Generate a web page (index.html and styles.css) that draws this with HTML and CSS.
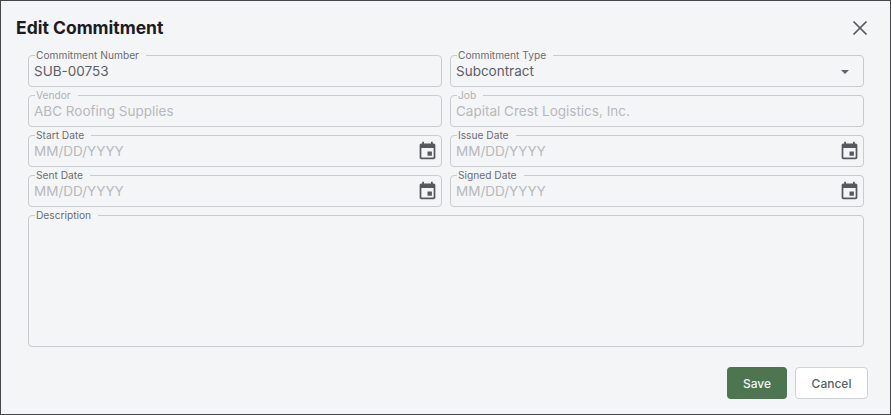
FILE: index.html
```html
<!DOCTYPE html>
<html lang="en">
<head>
  <meta charset="UTF-8" />
  <title>Edit Commitment</title>
  <link rel="stylesheet" href="styles.css">
</head>
<body>

  <div class="dialog">
    <!-- HEADER -->
    <div class="dialog-header">
      <h2>Edit Commitment</h2>
      <button class="close-btn" aria-label="Close">
        <svg viewBox="0 0 16 16"><path d="M1.500 1.500l13 13M14.500 1.500l-13 13"/></svg>
      </button>
    </div>

    <!-- FORM -->
    <div class="form-grid">
      <fieldset class="field">
        <legend>Commitment Number</legend>
        <span class="value">SUB-00753</span>
      </fieldset>
      <fieldset class="field">
        <legend>Commitment Type</legend>
        <span class="value">Subcontract</span>
        <span class="caret"></span>
      </fieldset>

      <fieldset class="field disabled">
        <legend>Vendor</legend>
        <span class="value">ABC Roofing Supplies</span>
      </fieldset>
      <fieldset class="field disabled">
        <legend>Job</legend>
        <span class="value">Capital Crest Logistics, Inc.</span>
      </fieldset>

      <fieldset class="field date">
        <legend>Start Date</legend>
        <span class="value">MM/DD/YYYY</span>
        <svg class="cal" viewBox="0 0 24 24"><path d="M19 4h-1V2h-2v2H8V2H6v2H5c-1.100 0-2 .9-2 2v14c0 1.100.9 2 2 2h14c1.100 0 2-.9 2-2V6c0-1.100-.9-2-2-2zm0 16H5V9h14v11zM12 13h5v5h-5z"/></svg>
      </fieldset>
      <fieldset class="field date">
        <legend>Issue Date</legend>
        <span class="value">MM/DD/YYYY</span>
        <svg class="cal" viewBox="0 0 24 24"><path d="M19 4h-1V2h-2v2H8V2H6v2H5c-1.100 0-2 .9-2 2v14c0 1.100.9 2 2 2h14c1.100 0 2-.9 2-2V6c0-1.100-.9-2-2-2zm0 16H5V9h14v11zM12 13h5v5h-5z"/></svg>
      </fieldset>

      <fieldset class="field date">
        <legend>Sent Date</legend>
        <span class="value">MM/DD/YYYY</span>
        <svg class="cal" viewBox="0 0 24 24"><path d="M19 4h-1V2h-2v2H8V2H6v2H5c-1.100 0-2 .9-2 2v14c0 1.100.9 2 2 2h14c1.100 0 2-.9 2-2V6c0-1.100-.9-2-2-2zm0 16H5V9h14v11zM12 13h5v5h-5z"/></svg>
      </fieldset>
      <fieldset class="field date">
        <legend>Signed Date</legend>
        <span class="value">MM/DD/YYYY</span>
        <svg class="cal" viewBox="0 0 24 24"><path d="M19 4h-1V2h-2v2H8V2H6v2H5c-1.100 0-2 .9-2 2v14c0 1.100.9 2 2 2h14c1.100 0 2-.9 2-2V6c0-1.100-.9-2-2-2zm0 16H5V9h14v11zM12 13h5v5h-5z"/></svg>
      </fieldset>

      <fieldset class="field description">
        <legend>Description</legend>
      </fieldset>
    </div>

    <!-- ACTIONS -->
    <div class="dialog-actions">
      <button class="btn btn-save">Save</button>
      <button class="btn btn-cancel">Cancel</button>
    </div>
  </div>

</body>
</html>
```

FILE: styles.css
```css
/* RESET */
*, *::before, *::after {
  box-sizing: border-box;
  margin: 0;
  padding: 0;
}

body {
  font-family: Inter, 'Noto Sans', sans-serif;
  background-color: #fff;
  color: #1c1f23;
}

/* DIALOG */
.dialog {
  width: 891px;
  height: 415px;
  background-color: #f4f5f7;
  border: 1px solid #44464a;
  padding: 0 22px 14px 27px;
  display: flex;
  flex-direction: column;
}

.dialog-header {
  display: flex;
  justify-content: space-between;
  align-items: center;
  height: 54px;
  margin-left: -12px;
  padding-bottom: 1px;
}

.dialog-header h2 {
  font-size: 17.5px;
  font-weight: 700;
  color: #1a1c1f;
}

.close-btn {
  width: 16px;
  height: 16px;
  border: none;
  background: none;
  display: flex;
}

.close-btn svg {
  width: 16px;
  height: 16px;
  fill: none;
  stroke: #55585c;
  stroke-width: 1.7;
}

/* FORM */
.form-grid {
  display: grid;
  grid-template-columns: 414px 414px;
  grid-template-rows: 32px 32px 32px 32px 132px;
  gap: 8px;
}

/* legend is 10px tall, the border sits on its middle, so pull each box up 5px */
.field {
  position: relative;
  border: 1px solid #c9cbce;
  border-radius: 4px;
  padding: 1px 5px 0;
  height: 37px;
  margin-top: -5px;
}

.field legend {
  font-size: 10.2px;
  line-height: 10px;
  margin-left: 1px;
  padding: 0 7px 0 1px;
  color: #6b6e72;
}

.field .value {
  display: block;
  font-size: 13.5px;
  line-height: 20px;
  color: #5d6064;
}

.field.disabled legend {
  color: #b0b2b5;
}

.field.disabled .value,
.field.date .value {
  color: #b7b9bc;
}

.caret {
  position: absolute;
  right: 14px;
  top: 10px;
  border-left: 4px solid transparent;
  border-right: 4px solid transparent;
  border-top: 4px solid #5f6266;
}

.cal {
  position: absolute;
  right: 3px;
  top: 0;
  width: 21px;
  height: 21px;
  fill: #55585c;
}

.description {
  grid-column: 1 / 3;
  height: 137px;
}

/* ACTIONS */
.dialog-actions {
  display: flex;
  justify-content: flex-end;
  gap: 8px;
  margin-top: 20px;
}

.btn {
  height: 32px;
  font-family: inherit;
  font-size: 12px;
  font-weight: 500;
  border-radius: 4px;
}

.btn-save {
  width: 60px;
  border: none;
  background-color: #4d7550;
  color: #f3f4f6;
}

.btn-cancel {
  width: 73px;
  background-color: #fff;
  border: 1px solid #cfd1d4;
  color: #5d6064;
}
```
